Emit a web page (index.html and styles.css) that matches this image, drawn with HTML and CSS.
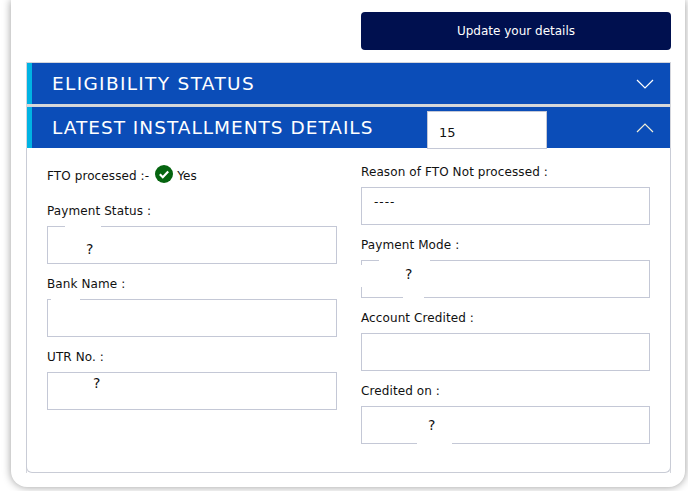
FILE: index.html
```html
<!DOCTYPE html>
<html lang="en">
<head>
	<meta charset="UTF-8">
	<meta name="viewport" content="width=device-width, initial-scale=1.0">
	<title>Latest installments details</title>
	<link rel="stylesheet" href="styles.css">
</head>
<body>
	<div class="card">
		<div class="actions">
			<button class="update-btn" type="button">Update your details</button>
		</div>

		<div class="panel">
			<div class="panel-head">
				<h2 class="wide">ELIGIBILITY STATUS</h2>
				<svg class="chevron" width="18" height="10" viewBox="0 0 18 10"><path d="M1 1l8 8 8-8"/></svg>
			</div>
		</div>

		<div class="panel open">
			<div class="panel-head">
				<h2>LATEST INSTALLMENTS DETAILS</h2>
				<div class="select-box">15</div>
				<svg class="chevron up" width="18" height="10" viewBox="0 0 18 10"><path d="M1 9l8-8 8 8"/></svg>
			</div>
			<div class="panel-body">
				<div class="col">
					<div class="field status-line">
						<span>FTO processed :-</span>
						<svg class="check" width="18" height="18" viewBox="0 0 18 18"><circle cx="9" cy="9" r="9"/><path d="M4.8 9.2l3 3 5.4-5.6"/></svg>
						<span>Yes</span>
					</div>
					<div class="field">
						<label>Payment Status :</label>
						<div class="box mask-a"><span class="q q-a">?</span></div>
					</div>
					<div class="field">
						<label>Bank Name :</label>
						<div class="box mask-b"></div>
					</div>
					<div class="field">
						<label>UTR No. :</label>
						<div class="box"><span class="q q-b">?</span></div>
					</div>
				</div>
				<div class="col">
					<div class="field">
						<label>Reason of FTO Not processed :</label>
						<div class="box"><span class="dash">----</span></div>
					</div>
					<div class="field">
						<label>Payment Mode :</label>
						<div class="box mask-c"><span class="side-gap"></span><span class="q q-c">?</span></div>
					</div>
					<div class="field">
						<label>Account Credited :</label>
						<div class="box"></div>
					</div>
					<div class="field">
						<label>Credited on :</label>
						<div class="box mask-d"><span class="q q-d">?</span></div>
					</div>
				</div>
			</div>
		</div>
	</div>
</body>
</html>
```

FILE: styles.css
```css
html, body { margin: 0; padding: 0; background-color: #fff; overflow: hidden; }
body { height: 491px; font-family: "DejaVu Sans", sans-serif; font-size: 12px; letter-spacing: 0.1px; color: #111; }
div { box-sizing: border-box; }

.card {
	margin: 0 3px 0 11px;
	height: 487px;
	padding: 12px 14px 0 15px;
	background: #fff;
	border-radius: 0 0 16px 16px;
	box-shadow: 0 0 9px rgba(0, 0, 0, 0.4);
}

.actions { display: flex; justify-content: flex-end; margin-bottom: 12px; }
.update-btn {
	width: 310px;
	height: 38px;
	border: 0;
	border-radius: 4px;
	background-color: #00104f;
	color: #fff;
	font-family: inherit;
	font-size: 12px;
	font-weight: 500;
}

.panel { border: solid #d3d5dc; border-width: 1px 1px 0 1px; }
.panel:not(.open) { border-bottom: 2px solid #d8d8d8; }

.panel-head {
	position: relative;
	height: 41px;
	display: flex;
	align-items: center;
	padding: 0 16px 0 20px;
	background-color: #0b4db8;
	border-left: 5px solid #00b3e3;
	color: #fff;
}
.panel-head h2 { flex: 1; margin: 0; font-size: 18.5px; font-weight: 400; letter-spacing: 1px; }
.panel-head h2.wide { letter-spacing: 1.33px; }

.chevron path { fill: none; stroke: #fff; stroke-width: 1.2; }
.chevron.up path { stroke: #f1efd8; }

.select-box {
	position: absolute;
	left: 395px;
	top: 4px;
	width: 120px;
	height: 38px;
	padding: 13px 0 0 11px;
	background: #fff;
	border: 1px solid #c4c8d6;
	color: #111;
	font-size: 13px;
}

.panel-body {
	display: grid;
	grid-template-columns: 290px 289px;
	column-gap: 24px;
	padding: 17px 0 0 20px;
	height: 325px;
	margin: 0 -1px;
	border: solid #c9ccd6;
	border-width: 0 1px 1px 1px;
	border-radius: 0 0 6px 6px;
}
.col { display: flex; flex-direction: column; }
.col:first-child { padding-top: 2px; }
.field { margin-bottom: 13px; }
.field label { display: block; margin-bottom: 7px; line-height: 15px; }

.status-line { display: flex; align-items: center; gap: 4px; margin-bottom: 19px; height: 18px; }
.status-line span:first-child { margin-right: 2px; }
.check { margin-top: -4px; }
.check circle { fill: #05640f; }
.check path { fill: none; stroke: #fff; stroke-width: 2.2; }

.box {
	position: relative;
	height: 38px;
	border: 1px solid #c4c8d6;
	background: #fff;
}
.dash { position: absolute; left: 12px; top: 7px; letter-spacing: 1px; }

.q { position: absolute; font-size: 14px; }
.q-a { left: 38px; top: 14px; }
.q-b { left: 45px; top: 2px; }
.q-c { left: 43px; top: 5px; }
.q-d { left: 66px; top: 10px; }

/* white patches where the values were blanked out */
.mask-a::before, .mask-b::before, .mask-c::before, .mask-c::after, .mask-d::after {
	content: "";
	position: absolute;
	background: #fff;
	height: 3px;
}
.mask-a::before { left: 17px; top: -1px; width: 36px; }
.mask-b::before { left: 3px; top: -1px; width: 29px; }
.mask-c::before { left: 17px; top: -1px; width: 51px; }
.mask-c::after { left: 41px; bottom: -1px; width: 21px; }
.mask-d::after { left: 55px; bottom: -1px; width: 35px; }
.side-gap { position: absolute; left: -1px; top: 4px; width: 3px; height: 22px; background: #fff; }
```
